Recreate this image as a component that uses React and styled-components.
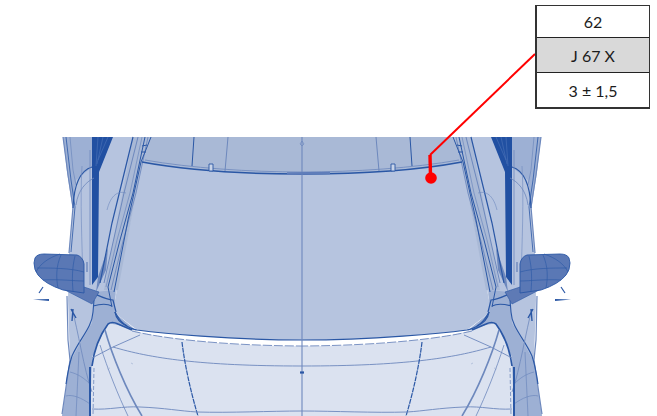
import styled, { createGlobalStyle } from 'styled-components';

const GlobalStyle = createGlobalStyle`
  html, body {
    margin: 0;
    background: #fff;
  }
`;

const Page = styled.div`
  position: relative;
  width: 657px;
  height: 416px;
  overflow: hidden;
  font-family: Lato, "Open Sans", sans-serif;
`;

const Drawing = styled.svg`
  display: block;
`;

const Callout = styled.div`
  position: absolute;
  top: 5px;
  left: 535px;
  width: 112px;
  display: grid;
  grid-template-rows: 31px 35px 35px;
  border: 1px solid #333;
  border-left-width: 2px;
  border-bottom-width: 2px;
`;

const CalloutRow = styled.div`
  display: flex;
  align-items: center;
  justify-content: center;
  font-size: 16px;
  color: #1c1c1c;
  background: ${(p) => (p.$shaded ? '#d9d9d9' : '#fff')};
  border-top: ${(p) => (p.$first ? 'none' : '1px solid #222')};
`;

const LINE = '#2a57a5';
const THIN = '#6d88bd';

const HalfCar = ({ flip }) => (
  <g transform={flip ? 'translate(604 0) scale(-1 1)' : undefined}>
    {/* body side */}
    <path d="M63 137 L147 137 L142 162 L115 300 L115 313 L108 323 L92 357 L90 416 L62 416 L70 360 L68 300 L69 253 L73 207 L68 175 Z" fill="#b6c4df" />
    <path d="M63 137 L92 137 L92 167 L76 180 L72 205 L67 172 Z" fill="#9db0d4" />
    <path d="M133 137 L147 137 L142 162 L118 290 L104 290 Z" fill="#a9b9d6" />
    <path d="M95 292 L115 290 L115 313 L137 331 L118 325 L107 323 L92 357 L90 416 L62 416 L70 362 L82 340 L92 323 Z" fill="#9db0d4" />

    {/* outer edge */}
    <path d="M63 137 L68 175 L73 207 L69 253 M67 296 L68 340 L70 360 L62 414" fill="none" stroke={THIN} strokeWidth="1.2" />
    <path d="M66 137 L71 180 L75 207 L71 252" fill="none" stroke={LINE} strokeWidth="0.8" />
    <path d="M70 137 L73 170 L76 185" fill="none" stroke={THIN} strokeWidth="0.7" />

    {/* dark pillar */}
    <path d="M92 137 L113 137 L99 172 L98 277 L92 285 Z" fill="#2150a2" />
    <path d="M98 137 L96 166 M103 137 L97 164 M108 137 L98 160" fill="none" stroke="#4d74b8" strokeWidth="0.6" />
    <path d="M98 277 L108 248 L106 270 L96 292 Z" fill="#6d88bd" />

    {/* arcs beside the pillar */}
    <path d="M92 167 C82 170 74 182 73 208" fill="none" stroke={LINE} strokeWidth="1.2" />
    <path d="M94 178 C86 182 78 190 76 205" fill="none" stroke={THIN} strokeWidth="0.8" />
    <path d="M82 166 C80 200 82 240 83 283" fill="none" stroke={THIN} strokeWidth="0.6" />
    <path d="M90 150 L90 285" fill="none" stroke={THIN} strokeWidth="0.8" />

    {/* A pillar strips */}
    <path d="M133 137 L112 223 L100 283" fill="none" stroke={LINE} strokeWidth="1.2" />
    <path d="M138 137 L124 193 L104 283" fill="none" stroke={THIN} strokeWidth="1" />
    <path d="M145 137 L133 193 L120 240 L108 287 L112 307" fill="none" stroke={LINE} strokeWidth="1" />
    <path d="M148 137 L136 193 L122 245 L111 290" fill="none" stroke={THIN} strokeWidth="0.9" />
    <path d="M142 137 L130 193 L117 240 L106 287" fill="none" stroke={THIN} strokeWidth="0.7" />
    <path d="M151 137 L141 162 L128 220 L114 292" fill="none" stroke={LINE} strokeWidth="1" />
    <path d="M147 145 L142 146 M146 152 L141 152" fill="none" stroke={LINE} strokeWidth="1" />
    <path d="M126 193 C116 190 110 198 107 210" fill="none" stroke={THIN} strokeWidth="0.6" />

    {/* neck under the mirror */}
    <path d="M88 291 C100 296 106 300 113 300 L116 312" fill="none" stroke={LINE} strokeWidth="1.2" />
    <path d="M93 306 C100 304 108 304 112 306" fill="none" stroke={LINE} strokeWidth="1.2" />
    <path d="M94 300 L93 312 C92 328 80 338 72 356 C70 362 68 370 66 384" fill="none" stroke={LINE} strokeWidth="1.1" />
    <path d="M72 309 C78 330 84 370 92 392" fill="none" stroke={THIN} strokeWidth="0.8" />
    <path d="M73 309 L72 321 M71 309 L76 318" fill="none" stroke={LINE} strokeWidth="1.4" />
    <path d="M70 372 C78 374 84 378 90 384 M66 396 C72 394 82 398 90 404 M79 352 L76 416" fill="none" stroke={THIN} strokeWidth="0.7" />

    {/* mirror */}
    <path d="M63 289 L92 304 L99 292 L84 287 Z" fill="#5e7ab5" stroke={LINE} strokeWidth="0.6" />
    <path d="M35 258 Q37 254 44 254 L77 255 Q83 257 84 264 L84 293 L63 290 Q45 284 38 275 Q34 270 34 263 Z" fill="#5a78b5" stroke={LINE} strokeWidth="0.9" />
    <path d="M60 254 C48 258 40 264 36 272 M84 272 C70 268 52 268 37 268 M84 281 C74 281 60 279 43 280 M61 255 C56 266 56 278 58 288 M75 256 C72 268 72 280 73 291" fill="none" stroke="#2f5ba8" strokeWidth="0.7" />
    <path d="M43 287 L39 293" fill="none" stroke={LINE} strokeWidth="1.2" />
    <path d="M33 299.5 L49 299 L49 301 Z" fill={LINE} />
    <path d="M87 262 L87 272" fill="none" stroke={THIN} strokeWidth="1.4" />

    {/* hood rim */}
    <path d="M92 366 C94 350 100 335 108 324 Q112 321 118 324 L132 330" fill="none" stroke={LINE} strokeWidth="1.7" />
    <path d="M90 367 L90 416" fill="none" stroke={LINE} strokeWidth="2" />
    <path d="M94 368 L93 416" fill="none" stroke={THIN} strokeWidth="0.8" strokeDasharray="4 2" />
    <path d="M115 312 C116 318 120 323 127 326" fill="none" stroke={LINE} strokeWidth="1.4" />

    {/* hood lines */}
    <path d="M140 335 L113 347 L92 358" fill="none" stroke={THIN} strokeWidth="0.9" />
    <path d="M113 347 C150 358 200 366 302 366" fill="none" stroke={THIN} strokeWidth="0.9" />
    <path d="M182 342 C184 360 190 390 198 416" fill="none" stroke={LINE} strokeWidth="1.2" strokeDasharray="5 0.8" />
    <path d="M105 330 C112 355 126 390 142 416" fill="none" stroke={THIN} strokeWidth="1.6" />
    <path d="M100 345 C108 370 118 395 128 416" fill="none" stroke={THIN} strokeWidth="0.8" />
    <path d="M92 409 C110 410 122 406 140 407 C165 408 180 411 197 412 C230 413 270 411 302 411" fill="none" stroke={THIN} strokeWidth="0.9" />
    <path d="M132 331 C160 338 220 345.5 302 346" fill="none" stroke={THIN} strokeWidth="0.9" strokeDasharray="9 2" />
    <path d="M107 369 L110 368 M131 363 L133 364" fill="none" stroke="#a9b9d6" strokeWidth="0.8" />

    {/* wiper base */}
    <path d="M142 162 C190 171 250 174 302 174" fill="none" stroke={LINE} strokeWidth="1.6" />
    <path d="M145 160 C190 168 250 172 302 172" fill="none" stroke={THIN} strokeWidth="0.8" />
    <path d="M194 137 L192 166" fill="none" stroke={LINE} strokeWidth="1" />
    <path d="M228 137 L225 171" fill="none" stroke={THIN} strokeWidth="1" />
    <path d="M209 164 L213 164 L213 171 L209 171 Z" fill="#c9d4e8" stroke={LINE} strokeWidth="0.9" />

    {/* bottom edge of the windscreen panel */}
    <path d="M115 312 C120 322 126 328 137 330 C160 333 230 340 302 340" fill="none" stroke={LINE} strokeWidth="1.2" />
  </g>
);

const App = () => (
  <Page>
    <GlobalStyle />
    <Drawing width="657" height="416" viewBox="0 0 657 416">
      {/* glass and panels */}
      <rect x="135" y="137" width="334" height="38" fill="#a9b9d6" />
      <path d="M142 162 C190 171 250 175 302 175 C354 175 414 171 462 162 L489 300 L489 313 L467 330 C420 337 360 340 302 340 C244 340 184 337 137 330 L115 313 L115 300 Z" fill="#b6c4df" />
      <path d="M108 323 Q112 321 118 324 L137 331 C184 342 244 346 302 346 C360 346 420 342 467 331 L486 324 Q492 321 496 323 L512 357 L514 416 L90 416 L92 357 Z" fill="#dbe2f0" />
      <path d="M132 330 C160 333 230 340 302 340 C374 340 444 333 472 330 C444 338 384 345.5 302 346 C220 345.5 160 338 132 330 Z" fill="#fff" />

      <HalfCar />
      <HalfCar flip />

      {/* centre line */}
      <path d="M302 137 L302 416" fill="none" stroke={THIN} strokeWidth="1.1" />
      <path d="M287 173.5 L330 173" fill="none" stroke="#5f7dba" strokeWidth="2.4" />
      <path d="M300 372.5 L304 372.5" fill="none" stroke={LINE} strokeWidth="2.2" />
      <path d="M300 144 L302 141 L304 144 L302 146 Z" fill="none" stroke={THIN} strokeWidth="0.7" />

      {/* leader */}
      <path d="M535 54 L430 155" fill="none" stroke="#ff0000" strokeWidth="2" />
      <path d="M430 155 L430.5 176" fill="none" stroke="#ff0000" strokeWidth="3.4" />
      <circle cx="431" cy="178" r="5.8" fill="#ff0000" />
    </Drawing>
    <Callout>
      <CalloutRow $first>62</CalloutRow>
      <CalloutRow $shaded>J 67 X</CalloutRow>
      <CalloutRow>3 ± 1,5</CalloutRow>
    </Callout>
  </Page>
);

export default App;
